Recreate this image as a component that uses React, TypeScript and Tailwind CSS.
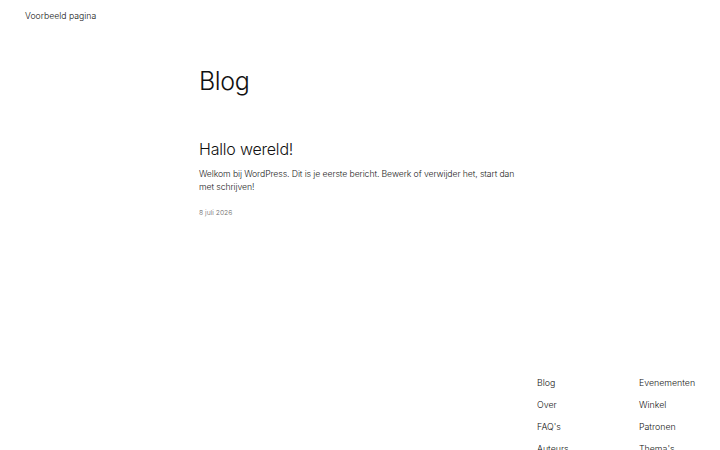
export default function App() {
  const col1 = ["Blog", "Over", "FAQ's", "Auteurs"];
  const col2 = ["Evenementen", "Winkel", "Patronen", "Thema's"];

  return (
    <div
      className="w-[720px] h-[450px] overflow-hidden bg-white text-[#111111]"
      style={{ fontFamily: "Inter, 'Noto Sans', sans-serif" }}
    >
      {/* Header */}
      <header className="px-[25px] pt-[10px] h-[40px]">
        <div className="text-[8.7px] leading-[12px] font-light">Voorbeeld pagina</div>
      </header>

      {/* Main */}
      <main className="pl-[199px] w-[560px]">
        <h1 className="mt-[24px] text-[25px] font-light leading-[34px] tracking-[-0.4px]">Blog</h1>

        <article className="mt-[40px]">
          <h2 className="text-[16px] font-light leading-[22px] tracking-[-0.2px]">Hallo wereld!</h2>
          <p className="mt-[8px] text-[8.7px] font-light leading-[13px] text-[#222] w-[330px] tracking-[-0.1px]">
            Welkom bij WordPress. Dit is je eerste bericht. Bewerk of verwijder het, start dan met schrijven!
          </p>
          <div className="mt-[14px] text-[6.8px] leading-[10px] font-light text-[#666]">8 juli 2026</div>
        </article>
      </main>

      {/* Footer */}
      <footer className="mt-[158px] flex justify-end pr-[25px]">
        <div className="flex">
          <ul className="w-[102px] flex flex-col gap-[9px]">
            {col1.map((l) => (
              <li key={l} className="text-[8.8px] font-light leading-[13px]">{l}</li>
            ))}
          </ul>
          <ul className="w-[56px] flex flex-col gap-[9px]">
            {col2.map((l) => (
              <li key={l} className="text-[8.8px] font-light leading-[13px] whitespace-nowrap">{l}</li>
            ))}
          </ul>
        </div>
      </footer>
    </div>
  );
}
